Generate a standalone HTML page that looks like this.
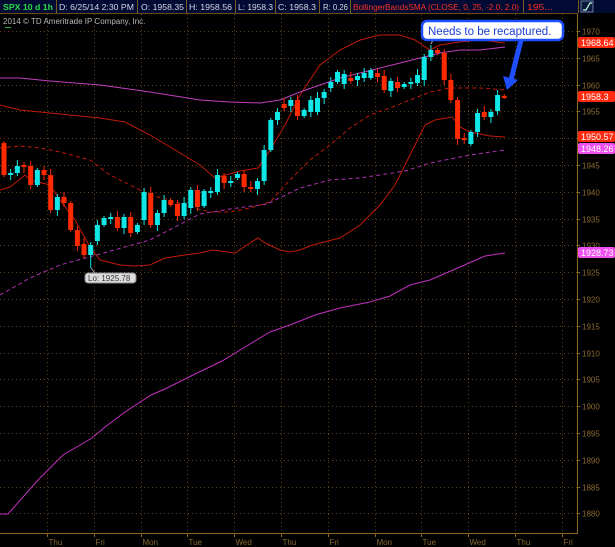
<!DOCTYPE html>
<html><head><meta charset="utf-8"><style>
html,body{margin:0;padding:0;background:#000;width:615px;height:547px;overflow:hidden;font-family:"Liberation Sans",sans-serif}
svg{display:block}
</style></head><body>
<svg id="s" width="615" height="547" xmlns="http://www.w3.org/2000/svg" font-family="Liberation Sans, sans-serif">
<rect width="615" height="547" fill="#000"/>
<g id="grid"></g>
<g id="lines"></g>
<g id="candles"></g>
<!-- header -->
<rect x="0" y="0" width="615" height="13" fill="#000a33"/>
<rect x="0" y="13" width="578" height="1" fill="#6b4a10"/>
<g font-size="8.5" fill="#d8d8e8" lengthAdjust="spacingAndGlyphs">
<text x="3" y="10" fill="#22dd44" font-weight="bold" textLength="50" lengthAdjust="spacingAndGlyphs">SPX 10 d 1h</text>
<text x="59" y="10" textLength="75" lengthAdjust="spacingAndGlyphs">D: 6/25/14 2:30 PM</text>
<text x="141" y="10" textLength="43" lengthAdjust="spacingAndGlyphs">O: 1958.35</text>
<text x="189" y="10" textLength="43" lengthAdjust="spacingAndGlyphs">H: 1958.56</text>
<text x="238" y="10" textLength="35" lengthAdjust="spacingAndGlyphs">L: 1958.3</text>
<text x="278" y="10" textLength="38" lengthAdjust="spacingAndGlyphs">C: 1958.3</text>
<text x="323" y="10" textLength="25" lengthAdjust="spacingAndGlyphs">R: 0.26</text>
<text x="353" y="10" fill="#ff3322" textLength="166" lengthAdjust="spacingAndGlyphs">BollingerBandsSMA (CLOSE, 0, 25, -2.0, 2.0)</text>
<text x="527" y="10" fill="#ff3322" textLength="26" lengthAdjust="spacingAndGlyphs">195...</text>
</g>
<g stroke="#7a5a20" stroke-width="1">
<line x1="56.5" y1="0" x2="56.5" y2="13"/><line x1="137.5" y1="0" x2="137.5" y2="13"/>
<line x1="186.5" y1="0" x2="186.5" y2="13"/><line x1="235.5" y1="0" x2="235.5" y2="13"/>
<line x1="275.5" y1="0" x2="275.5" y2="13"/><line x1="319.5" y1="0" x2="319.5" y2="13"/>
<line x1="350.5" y1="0" x2="350.5" y2="13"/><line x1="523.5" y1="0" x2="523.5" y2="13"/>
<line x1="578.5" y1="0" x2="578.5" y2="13"/>
</g>
<rect x="581" y="1" width="12" height="11" fill="#0b1a3a" stroke="#8899bb" stroke-width="0.8"/>
<path d="M583 10 L586 10 L590 3 L592 3" stroke="#cfe" stroke-width="1.2" fill="none"/>
<text x="3" y="24" font-size="8" fill="#b8b8b8">2014 © TD Ameritrade IP Company, Inc.</text>
<rect x="5" y="27" width="6" height="1" fill="#22aa33"/>
<!-- axes -->
<line x1="577.5" y1="14" x2="577.5" y2="534" stroke="#8a6420"/>
<line x1="0" y1="533.5" x2="578" y2="533.5" stroke="#8a6420"/>
<g id="axis" font-size="8" fill="#8a6a30"></g>
<!-- price tags -->
<g font-size="9">
<rect x="578" y="37" width="37" height="11" rx="2" fill="#ff2a10"/><text x="581" y="46" fill="#fff">1968.64</text>
<rect x="578" y="91" width="37" height="11" rx="2" fill="#ff2a10"/><text x="581" y="100" fill="#fff">1958.3</text>
<rect x="578" y="131" width="37" height="11" rx="2" fill="#ff2a10"/><text x="581" y="140" fill="#fff">1950.57</text>
<rect x="578" y="143" width="37" height="11" rx="2" fill="#f050f0"/><text x="581" y="152" fill="#fff">1948.26</text>
<rect x="578" y="247" width="37" height="11" rx="2" fill="#f050f0"/><text x="581" y="256" fill="#fff">1928.73</text>
</g>
<!-- Lo label -->
<line x1="91" y1="268" x2="95" y2="273" stroke="#aaa"/>
<rect x="85" y="273" width="51" height="10" rx="3" fill="#ddd" stroke="#888"/>
<text x="88" y="281" font-size="8" fill="#333">Lo: 1925.78</text>
<!-- callout -->
<path d="M521 40 L511 80" stroke="#1e4fff" stroke-width="5" fill="none"/>
<path d="M503 76 L507 90 L518 80 Z" fill="#1e4fff"/>
<line x1="434" y1="38" x2="431" y2="44" stroke="#aaa"/>
<rect x="422" y="21" width="141" height="19" rx="5" fill="#fff" stroke="#1e4fff" stroke-width="2.5"/>
<text x="428" y="35" font-size="11.5" fill="#1d40d8">Needs to be recaptured.</text>
</svg>
<script>
var NS="http://www.w3.org/2000/svg";
function el(p,t,a){var e=document.createElementNS(NS,t);for(var k in a)e.setAttribute(k,a[k]);p.appendChild(e);return e;}
var g=document.getElementById('grid'),ax=document.getElementById('axis');
for(var k=0;k<19;k++){var y=Math.round(31+k*26.8)+0.5,p=1970-5*k;
 el(g,'line',{x1:0,y1:y,x2:577,y2:y,stroke:'#5a4418','stroke-dasharray':'1,3'});
 el(ax,'line',{x1:577,y1:y,x2:580,y2:y,stroke:'#8a6420'});
 var t=el(ax,'text',{x:582,y:y+3});t.textContent=p;}
var days=['Thu','Fri','Mon','Tue','Wed','Thu','Fri','Mon','Tue','Wed','Thu','Fri'];
for(var i=0;i<12;i++){var x=Math.round(47+i*46.8)+0.5;
 el(g,'line',{x1:x,y1:14,x2:x,y2:533,stroke:'#5a4418','stroke-dasharray':'1,3'});
 el(ax,'line',{x1:x,y1:533,x2:x,y2:537,stroke:'#8a6420'});
 var t=el(ax,'text',{x:x+1,y:545});t.textContent=days[i];}
var L=document.getElementById('lines');
function pl(pts,col,dash,w){var d=pts.map(function(q,i){return (i?'L':'M')+q[0]+' '+q[1]}).join(' ');
 var a={d:d,stroke:col,fill:'none','stroke-width':w||1};if(dash)a['stroke-dasharray']=dash;el(L,'path',a);}
pl([[0,105],[20,110],[40,112],[70,115],[100,118],[125,122],[150,135],[175,150],[200,165],[215,178],[240,171],[258,168],[270,150],[285,125],[300,95],[320,65],[340,50],[360,40],[380,35],[400,35],[415,40],[430,50],[440,45],[460,42],[480,40],[505,43]],'#c01a0a');
pl([[0,148],[20,146],[40,148],[60,152],[90,160],[110,175],[130,185],[150,195],[170,200],[190,207],[210,212],[230,212],[250,208],[270,202],[290,180],[310,160],[330,145],[350,128],[370,115],[390,108],[410,100],[430,92],[450,88],[480,88],[505,90]],'#c01a0a','4,3');
pl([[0,190],[10,187],[25,175],[30,180],[50,185],[60,200],[75,220],[90,247],[100,260],[120,265],[135,266],[150,265],[165,258],[185,255],[200,253],[212,250],[235,253],[250,243],[258,238],[265,243],[280,250],[290,252],[300,250],[310,246],[320,243],[340,238],[360,225],[380,205],[395,185],[405,165],[415,145],[425,125],[435,120],[452,117],[460,127],[470,132],[490,136],[505,137]],'#c01a0a');
pl([[0,78],[20,78],[50,81],[100,85],[150,92],[200,100],[230,102],[260,103],[280,100],[300,92],[320,85],[340,78],[360,73],[380,68],[400,63],[420,58],[440,53],[460,50],[480,50],[505,47]],'#c040c0');
pl([[0,295],[30,278],[60,265],[100,254],[150,240],[200,214],[230,209],[267,204],[300,188],[330,180],[360,178],[405,171],[430,163],[470,155],[505,150]],'#b030b0','4,3');
pl([[0,514],[8,514],[38,480],[63,455],[92,438],[105,427],[125,412],[151,395],[165,389],[175,384],[195,374],[222,361],[250,344],[270,332],[290,325],[315,315],[340,308],[370,302],[390,296],[410,285],[430,280],[453,270],[485,256],[505,253]],'#c030c0');
var D=[['r',143,175],['c',173,175],['c',166,173],['r',165,167],['r',166,185],['c',170,185],['r',170,175],['r',175,210],['c',197,210],['r',197,203],['r',203,230],['r',230,246],['r',244,255],['c',245,255],['c',225,241],['c',218,225],['c',217,219],['r',217,228],['c',217,228],['r',217,233],['c',225,232],['c',192,220],['r',193,225],['c',213,225],['c',200,213],['r',200,205],['r',204,216],['c',203,216],['c',190,208],['r',190,207],['c',191,206],['c',191,193],['c',175,192],['r',176,183],['c',181,183],['c',174,178],['r',174,187],['r',187,189],['c',181,189],['c',150,181],['c',120,150],['c',112,120],['r',104,108],['c',100,106],['r',100,116],['c',110,116],['c',100,112],['c',98,112],['c',92,98],['c',82,88],['c',72,82],['c',74,84],['r',78,81],['c',76,80],['c',73,78],['c',70,78],['r',73,77],['r',76,90],['c',81,91],['r',82,88],['c',84,87],['c',82,84],['c',75,83],['c',57,80],['c',50,57],['r',50,53],['r',53,80],['r',80,100],['r',100,139],['r',138,140],['c',132,144],['c',113,132],['r',112,117],['c',112,117],['c',95,111],['r',96,97]];
var C=document.getElementById('candles');
D.forEach(function(b,i){var x=4+i*6.67,col=b[0]=='r'?'#ff2a00':'#10e8e8';
 var wt=b[1]-2-(i*7%5),wb=b[2]+2+(i*3%5);if(i==13)wb=268;
 el(C,'line',{x1:x,y1:wt,x2:x,y2:wb,stroke:col,'stroke-width':1});
 var h=Math.max(2,b[2]-b[1]);el(C,'rect',{x:x-2.5,y:b[1],width:5,height:h,fill:col});});
</script>
</body></html>
